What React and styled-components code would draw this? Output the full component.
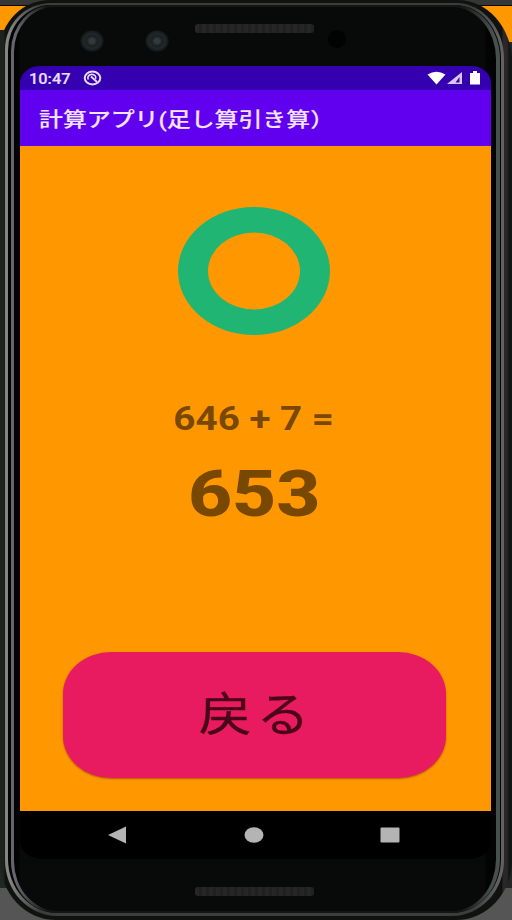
import React from 'react'
import styled, { createGlobalStyle } from 'styled-components';

const GlobalStyle = createGlobalStyle`
  * { box-sizing: border-box; }
  body {
    margin: 0;
    font-family: Roboto, "Noto Sans CJK JP", sans-serif;
  }
`;

const Backdrop = styled.div`
  width: 512px;
  height: 920px;
  overflow: hidden;
  background:
    linear-gradient(#1d221e, #1d221e) 0 30px / 6px 20px no-repeat,
    linear-gradient(#363636 0 5px, #0c0800 5px 6px, #ff9800 6px 42px, #222624 42px 888px, #555 888px);
`;

const Shell = styled.div`
  height: 920px;
  padding: 3px 8px 4px 5px;
  border-radius: 50px 54px 56px 56px / 50px 62px 60px 60px;
  background: linear-gradient(90deg, #1d221e 0 4px, #101210 5px 502px, #2b2729 503px 507px, #101614 509px);
`;

const OuterRim = styled.div`
  height: 100%;
  padding: 2px 3px 3px 3px;
  border-radius: 46px 48px 52px 52px / 46px 56px 56px 56px;
  background: linear-gradient(90deg, #83857f 0 5px, #3c3d3d 34px, #3c3d3d 468px, #626262 494px);
`;

const Gap = styled.div`
  height: 100%;
  padding: 0 1px 0 3px;
  border-radius: 43px 46px 50px 50px / 45px 54px 54px 54px;
  background: #040404;
`;

const InnerRim = styled.div`
  height: 100%;
  padding: 2px 4px 2px 3px;
  border-radius: 42px 46px 48px 46px / 46px 54px 54px 52px;
  background: linear-gradient(90deg, #65656d 0 5px, #151515 36px, #151515 450px, #46504e 481px);
`;

const Face = styled.div`
  height: 100%;
  display: flex;
  flex-direction: column;
  padding: 0 4px 0 6px;
  border-radius: 40px 44px 44px 44px / 45px 52px 52px 50px;
  background: linear-gradient(90deg, #030303 0 5px, #080909 6px 470px, #030303 473px);
`;

const Bezel = styled.div`
  position: relative;
  flex: none;
  height: ${props => props.$height}px;
`;

const Speaker = styled.div`
  position: absolute;
  left: 175px;
  top: ${props => props.$top}px;
  width: 119px;
  height: 9px;
  border-radius: 3px;
  background: repeating-linear-gradient(90deg, #262626 0 4px, #202020 4px 7px);
`;

const Lens = styled.div`
  position: absolute;
  left: ${props => props.$left}px;
  top: 23px;
  width: ${props => props.$size || 24}px;
  height: ${props => props.$size || 22}px;
  border-radius: 50%;
  background: ${props => props.$dark ? '#020202' : 'radial-gradient(#343a3c 0 15%, #1a2022 32%, #20282a 48%, #171c1d 62%, #0b0d0d 71%)'};
`;

const Screen = styled.div`
  flex: none;
  display: flex;
  flex-direction: column;
  width: 471px;
  height: 793px;
  border-radius: 20px 20px 22px 22px / 17px 17px 18px 18px;
  overflow: hidden;
  background: #000;
`;

const StatusBar = styled.div`
  display: flex;
  align-items: center;
  height: 24px;
  padding: 0 9px;
  background: #3500b0;
  color: #e9dcff;
`;

const Clock = styled.span`
  width: 54px;
  font-size: 14px;
  font-weight: 500;
  -webkit-text-stroke: 0.2px;
  transform: translateY(1px) scaleX(1.17);
  transform-origin: left;
`;

const StatusIcons = styled.div`
  display: flex;
  margin-left: auto;
`;

const AppBar = styled.div`
  display: flex;
  align-items: center;
  height: 56px;
  padding: 4px 0 0 19px;
  background: #6000ee;
  color: #f3e4ff;
`;

const Title = styled.h1`
  margin: 0;
  font-size: 20px;
  font-weight: 500;
  line-height: 28px;
  white-space: nowrap;
  -webkit-text-stroke: 0.15px;
  transform: scaleX(1.195);
  transform-origin: left;
`;

const Content = styled.main`
  display: flex;
  flex-direction: column;
  align-items: center;
  height: 665px;
  padding: 60px 3px 0 0;
  background: #ff9800;
`;

const Equation = styled.div`
  margin-top: 63px;
  font-size: 33px;
  font-weight: 700;
  line-height: 40px;
  white-space: pre;
  color: #794800;
  transform: scaleX(1.17);
`;

const Answer = styled.div`
  margin-top: 17px;
  font-size: 65px;
  font-weight: 800;
  line-height: 76px;
  color: #794800;
  transform: scaleX(1.18);
`;

const BackButton = styled.button`
  width: 383px;
  height: 126px;
  margin-top: 120px;
  padding: 0;
  border: 0;
  border-radius: 48px / 42px;
  background: #e91b60;
  box-shadow: 0 1px 2px rgba(120, 50, 0, 0.6);
  color: #4b0519;
  font-family: "Noto Sans CJK SC", "Noto Sans CJK JP", sans-serif;
`;

const ButtonLabel = styled.span`
  display: block;
  font-size: 47px;
  line-height: 60px;
  letter-spacing: 4px;
  -webkit-text-stroke: 0.3px;
  transform: translate(2px, -4px) scaleX(1.13);
`;

const NavBar = styled.nav`
  display: flex;
  align-items: center;
  justify-content: space-between;
  height: 48px;
  padding: 0 91px 0 88px;
`;

export default function App() {
  return (
    <Backdrop>
      <GlobalStyle />
      <Shell>
        <OuterRim>
          <Gap>
            <InnerRim>
              <Face>
                <Bezel $height={59}>
                  <Lens $left={60} />
                  <Lens $left={125} />
                  <Speaker $top={17} />
                  <Lens $left={308} $size={18} $dark />
                </Bezel>

                <Screen>
                  <StatusBar>
                    <Clock>10:47</Clock>
                    <svg width="19" height="16" viewBox="0 0 19 16" fill="none" stroke="currentColor">
                      <ellipse cx="9.5" cy="8" rx="7.8" ry="6.5" strokeWidth="2" />
                      <path d="M5.500 9.500A4 3.300 0 1 1 12.500 9" strokeWidth="1.6" />
                      <path d="M8 6.500l6 5.500" strokeWidth="1.8" />
                    </svg>
                    <StatusIcons>
                      <svg width="55" height="16" viewBox="0 0 55 16" fill="#fff">
                        <path d="M0.500 4.500Q9.500-1 18.500 4.500L9.500 14.500Z" />
                        <path d="M35 2v12H20z" fill="#d9c8f5" />
                        <path d="M32.500 7v5.500h-4z" fill="#3500b0" />
                        <path d="M43 3h3V1h4v2h3v11.500h-10z" />
                      </svg>
                    </StatusIcons>
                  </StatusBar>

                  <AppBar>
                    <Title>計算アプリ(足し算引き算）</Title>
                  </AppBar>

                  <Content>
                    <svg width="154" height="130" viewBox="0 0 154 130">
                      <ellipse cx="77" cy="65" rx="76" ry="64" fill="#21b573" />
                      <ellipse cx="77" cy="65" rx="46" ry="38.5" fill="#ff9800" />
                    </svg>
                    <Equation>646 + 7 =</Equation>
                    <Answer>653</Answer>
                    <BackButton>
                      <ButtonLabel>戻る</ButtonLabel>
                    </BackButton>
                  </Content>

                  <NavBar>
                    <svg width="18" height="18" viewBox="0 0 18 18"><path d="M0 9L18 0.500v17z" fill="#b4b4b4" /></svg>
                    <svg width="22" height="16" viewBox="0 0 22 16"><ellipse cx="12" cy="8" rx="9.500" ry="7.800" fill="#b4b4b4" /></svg>
                    <svg width="20" height="16" viewBox="0 0 20 16"><rect x="0.500" y="0.500" width="19" height="15" rx="1" fill="#b4b4b4" /></svg>
                  </NavBar>
                </Screen>

                <Bezel $height={50}>
                  <Speaker $top={28} />
                </Bezel>
              </Face>
            </InnerRim>
          </Gap>
        </OuterRim>
      </Shell>
    </Backdrop>
  )
}
